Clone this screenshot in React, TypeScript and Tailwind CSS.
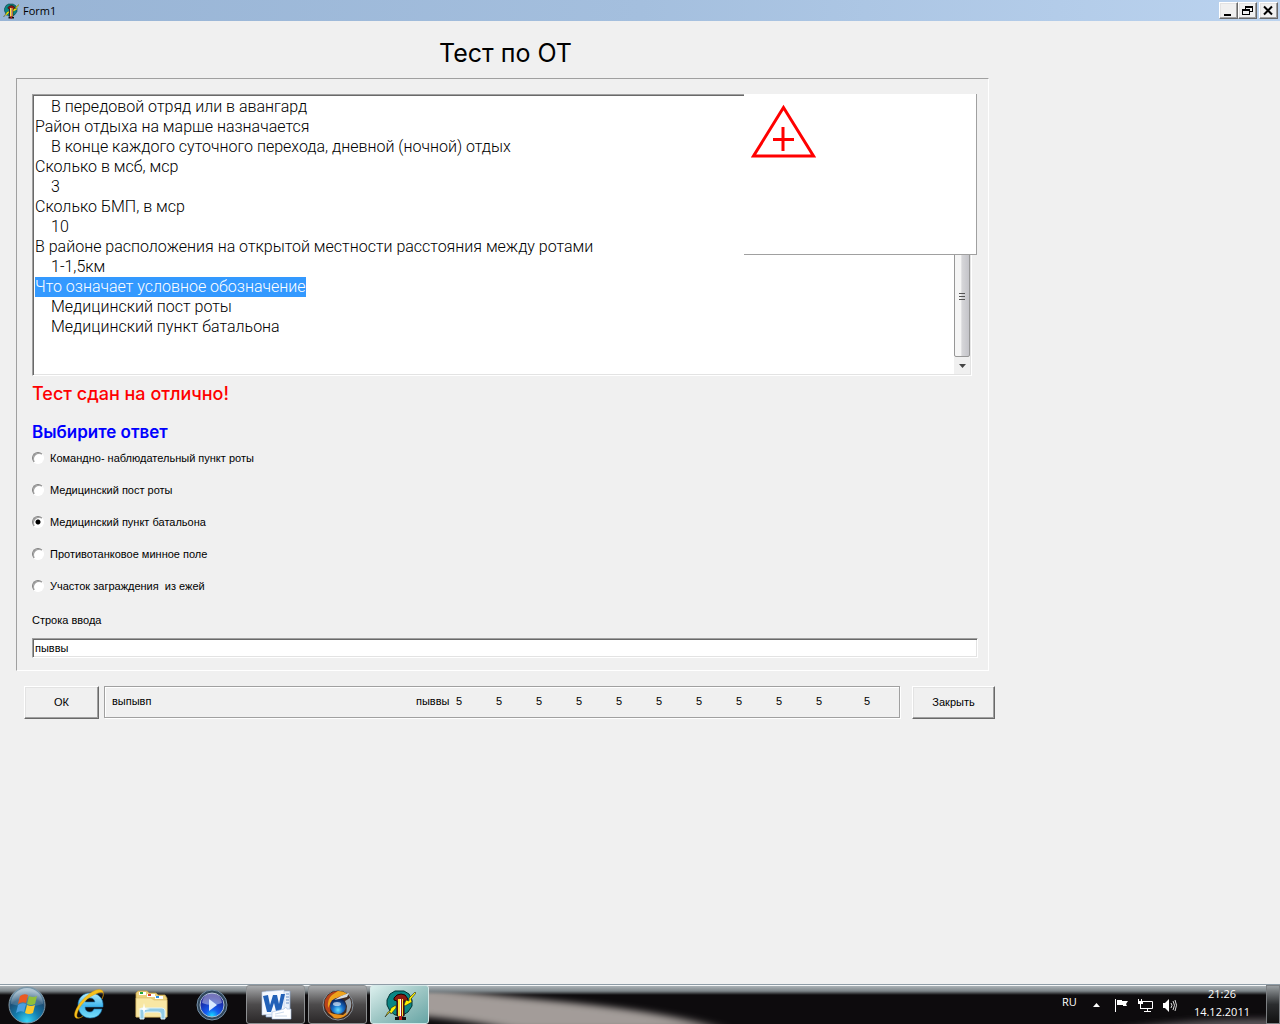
import { useState } from "react";
import type { ReactNode } from "react";
import { clsx } from "clsx";

type Line = { text: string; indent?: boolean; selected?: boolean };

const lines: Line[] = [
  { text: "В передовой отряд или в авангард", indent: true },
  { text: "Район отдыха на марше назначается" },
  { text: "В конце каждого суточного перехода, дневной (ночной) отдых", indent: true },
  { text: "Сколько в мсб, мср" },
  { text: "3", indent: true },
  { text: "Сколько БМП, в мср" },
  { text: "10", indent: true },
  { text: "В районе расположения на открытой местности расстояния между ротами" },
  { text: "1-1,5км", indent: true },
  { text: "Что означает условное обозначение", selected: true },
  { text: "Медицинский пост роты", indent: true },
  { text: "Медицинский пункт батальона", indent: true },
];

const answers = [
  "Командно- наблюдательный пункт роты",
  "Медицинский пост роты",
  "Медицинский пункт батальона",
  "Противотанковое минное поле",
  "Участок заграждения  из ежей",
];

const grades = [5, 5, 5, 5, 5, 5, 5, 5, 5, 5];

const raised =
  "border border-t-white border-l-white border-r-[#696969] border-b-[#696969] bg-[#f0f0f0] shadow-[inset_-1px_-1px_0_#a0a0a0,inset_1px_1px_0_#e3e3e3]";
const sunken =
  "border border-t-[#a0a0a0] border-l-[#a0a0a0] border-r-white border-b-white bg-white shadow-[inset_1px_1px_0_#696969,inset_-1px_-1px_0_#e3e3e3]";

function DelphiIcon({ className }: { className?: string }) {
  return (
    <svg viewBox="0 0 32 32" className={className} aria-hidden="true">
      <path d="M11 2h9l5 3 3 6v6l-4 6-5 3h-8l-5-4-3-6v-5l3-6z" fill="#0a8583" stroke="#033" strokeWidth="1" />
      <path d="M10 9l3-3 4-1 4 1 3 4-1 2h-3v15h-7V12l-3-1z" fill="#8b1a12" stroke="#200" strokeWidth="1" />
      <path d="M14 10h2v17h-2z" fill="#ffe640" />
      <path d="M16 10h1v17h-1z" fill="#fff" />
      <path d="M18 10h1v17h-1z" fill="#ffe640" />
      <path d="M11 28h11v3H11z" fill="#111" />
      <path d="M15 27h3v4h-3z" fill="#c01818" />
      <path d="M31 3l-6 6v3l-3-1-2 5 1 1 7-4-1-3 5-6z" fill="#fff200" stroke="#222" strokeWidth=".6" />
      <path d="M1 28l5-5 1 2 5-6v-3l-5 3-1 3-2 1z" fill="#fff200" stroke="#222" strokeWidth=".6" />
    </svg>
  );
}

function StartOrb() {
  return (
    <svg viewBox="0 0 38 38" className="size-[38px]" aria-hidden="true">
      <defs>
        <radialGradient id="orb" cx=".5" cy=".95" r=".85">
          <stop offset="0" stopColor="#37d5f5" />
          <stop offset=".4" stopColor="#137eaf" />
          <stop offset=".75" stopColor="#1c4e75" />
          <stop offset="1" stopColor="#6d92aa" />
        </radialGradient>
        <linearGradient id="orbGloss" x2="0" y2="1">
          <stop offset="0" stopColor="#fff" stopOpacity=".5" />
          <stop offset="1" stopColor="#fff" stopOpacity=".1" />
        </linearGradient>
      </defs>
      <circle cx="19" cy="19" r="18" fill="url(#orb)" stroke="#8197a4" />
      <path d="M3 18a16 16 0 0132 0q-16 5-32 0z" fill="url(#orbGloss)" />
      <path d="M12 10q4-3 8-1l-2 8q-4-2-8 1z" fill="#ea5a22" />
      <path d="M21 10q4 2 8 0l-2 8q-4 2-8 0z" fill="#91bf39" />
      <path d="M10 19q4-3 8-1l-2 8q-4-2-8 1z" fill="#4a9fe0" />
      <path d="M19 19q4 2 8 0l-2 8q-4 2-8 0z" fill="#fdc92c" />
    </svg>
  );
}

function ExplorerE() {
  return (
    <svg viewBox="0 0 32 32" className="size-8" aria-hidden="true">
      <defs>
        <linearGradient id="ie" x2="0" y2="1">
          <stop offset="0" stopColor="#b8effd" />
          <stop offset=".5" stopColor="#45b8ee" />
          <stop offset="1" stopColor="#78dffa" />
        </linearGradient>
      </defs>
      <path
        d="M16 4C9 4 4 9 4 16s5 13 12 13c7 0 11-4 12-9h-8c-1 2-2 3-4 3-3 0-5-2-5-5h18c1-9-5-14-13-14zm-5 9c1-3 2-4 5-4s4 1 5 4z"
        fill="url(#ie)"
        stroke="#1778b8"
        strokeWidth=".6"
      />
      <path
        d="M28 10c3-6 1-8-4-6C15 7 5 16 3 25c-1 4 2 5 6 2-5 4-10 3-8-4C4 14 14 4 22 1c7-2 9 2 6 9z"
        fill="#f8c21c"
        stroke="#d99408"
        strokeWidth=".4"
      />
    </svg>
  );
}

function FolderIcon() {
  return (
    <svg viewBox="0 0 34 32" className="h-8 w-[34px]" aria-hidden="true">
      <path d="M2 4l2-2h9l2 2h7l2 2h7l2 3v19H2z" fill="#ecd17c" stroke="#c4a24c" strokeWidth=".8" />
      <path d="M5 3h7v3H5zM13 5h8v3h-8zM21 7h8v3h-8z" fill="#fff" />
      <path d="M6 3h3v2H6z" fill="#20a83c" />
      <path d="M14 5h3v2h-3z" fill="#d8402c" />
      <path d="M22 7h3v2h-3z" fill="#2c8fe0" />
      <path d="M2 9h15l3 2h13v17H2z" fill="#f8e7a4" stroke="#d8bb68" strokeWidth=".6" />
      <path d="M6 30V21q0-2 2-2h20q3 0 3 3v8h-4v-5q0-2-3-2H13q-3 0-3 2v5z" fill="#93cce6" stroke="#e0f4fc" />
      <path d="M10 14l1 5 5 1-5 1-1 5-1-5-5-1 5-1z" fill="#fff" />
    </svg>
  );
}

function PlayerIcon() {
  return (
    <svg viewBox="0 0 32 32" className="size-8" aria-hidden="true">
      <defs>
        <radialGradient id="player" cx=".5" cy=".95" r=".8">
          <stop offset="0" stopColor="#18dcff" />
          <stop offset=".35" stopColor="#155cf0" />
          <stop offset="1" stopColor="#1a1c90" />
        </radialGradient>
      </defs>
      <circle cx="16" cy="16" r="15" fill="#30475c" stroke="#7892a8" />
      <circle cx="16" cy="16" r="12" fill="url(#player)" stroke="#a9bccf" strokeWidth="1" />
      <path d="M6 14a10 10 0 0120 0q-10 4-20 0z" fill="#fff" fillOpacity=".4" />
      <path d="M13 10l8 6-8 6z" fill="#d8e9ff" />
    </svg>
  );
}

function WordIcon() {
  return (
    <svg viewBox="0 0 32 32" className="size-8" aria-hidden="true">
      <path d="M6 2h24v26H6z" fill="#e8f0fa" stroke="#8aa7cf" strokeWidth=".7" />
      <path d="M26 5h3M26 8h3M26 11h3M26 14h3" stroke="#6d92c6" />
      <path d="M2 3l22-2v23L2 26z" fill="#f5f9ff" stroke="#b5cbe8" strokeWidth=".6" />
      <path d="M3 7l5-1 2 10 3-10h4l2 9 2-10h4l-4 17h-5l-2-8-3 9H7z" fill="#2161b8" />
      <path d="M12 23l12-3 2-2 1 2h4v10H12z" fill="#fff" stroke="#a9c1e0" strokeWidth=".6" />
      <path d="M15 25l9-2M15 27h12" stroke="#b8cbe4" strokeWidth=".7" />
    </svg>
  );
}

function BrowserIcon() {
  return (
    <svg viewBox="0 0 32 32" className="size-8" aria-hidden="true">
      <defs>
        <radialGradient id="globe" cx=".5" cy=".75" r=".7">
          <stop offset="0" stopColor="#67e2ff" />
          <stop offset=".45" stopColor="#1670cc" />
          <stop offset="1" stopColor="#0b1c50" />
        </radialGradient>
      </defs>
      <circle cx="16" cy="16" r="15" fill="#3d2b24" stroke="#87929c" />
      <path d="M3 11A14 14 0 0116 2l3 5-8 5-3 9 2 6A14 14 0 013 11z" fill="#b9431a" />
      <path d="M16 2q6 0 9 3l-9 3-7 5-3 6q-1-9 4-13z" fill="#eea31d" />
      <path d="M28 20a13 13 0 01-16 9l-6-6 6 2 9 1z" fill="#e8921d" />
      <circle cx="16" cy="17" r="8" fill="url(#globe)" />
      <path d="M27 4l-8 3-7 4 5-1 8-2z" fill="#d9dde0" />
      <path d="M28 9q4 10-4 17l1-9-2-5z" fill="#9aa3ab" />
      <ellipse cx="15" cy="15" rx="4" ry="2" fill="#fff" fillOpacity=".6" />
    </svg>
  );
}

function TitleBar() {
  const button = clsx(raised, "flex h-[17px] w-[19px] items-center justify-center");
  return (
    <header className="flex h-[21px] items-center bg-linear-to-r from-[#98b4d5] via-[#a4bfde] to-[#bbd3ef] pr-[2px] pl-[3px]">
      <DelphiIcon className="size-4" />
      <h1 className="ml-1 flex-1 font-['Open_Sans',sans-serif] text-[11px] leading-4">Form1</h1>
      <button type="button" aria-label="Свернуть" className={button}>
        <svg width="13" height="11" aria-hidden="true">
          <path d="M2 9h7v2H2z" />
        </svg>
      </button>
      <button type="button" aria-label="Восстановить" className={button}>
        <svg width="13" height="11" aria-hidden="true">
          <path d="M4 1h8v6H9V6h2V3H5v1H4zM1 4h8v6H1zm1 2v3h6V6z" fillRule="evenodd" />
        </svg>
      </button>
      <button type="button" aria-label="Закрыть окно" className={clsx(button, "ml-[2px]")}>
        <svg width="13" height="11" aria-hidden="true">
          <path d="M2 1.500l8 8M10 1.500l-8 8" stroke="#000" strokeWidth="2" />
        </svg>
      </button>
    </header>
  );
}

function QuestionLog() {
  return (
    <div className="relative">
      <div className={clsx(sunken, "mr-[6px] flex h-[282px] p-px")}>
        <ul className="flex-1 overflow-hidden pt-px pl-px font-[Roboto,sans-serif] text-base leading-5 font-light whitespace-nowrap">
          {lines.map((line) => (
            <li key={line.text} className={clsx(line.indent && "pl-4")}>
              <span className={clsx("inline-block", line.selected && "bg-[#3399ff] text-white")}>{line.text}</span>
            </li>
          ))}
        </ul>
        <div className="flex w-4 flex-col bg-[#f0f0f0]" aria-hidden="true">
          <div className="flex flex-1 flex-col items-center rounded-xs border border-[#979797] bg-linear-to-r from-[#f5f5f5] from-40% via-[#d6d6d9] via-50% to-[#c4c4c9] pt-[195px]">
            <svg width="8" height="9">
              <path d="M1 1.500h6M1 4.500h6M1 7.500h6" stroke="#555" />
            </svg>
          </div>
          <div className="flex h-[17px] items-center justify-center">
            <svg width="7" height="4">
              <path d="M0 0h7L3.500 4z" fill="#444" />
            </svg>
          </div>
        </div>
      </div>
      {/* question picture, covers the corner of the log */}
      <div className="absolute top-0 right-px h-[161px] w-[233px] border-r border-b border-[#a0a0a0] bg-white">
        <svg width="80" height="70" role="img" aria-label="Условное обозначение">
          <path d="M39.500 13.500L9.500 62H69.500z" fill="none" stroke="#f00" strokeWidth="3" />
          <path d="M29 45.500h21M39 33v24" stroke="#f00" strokeWidth="3" />
        </svg>
      </div>
    </div>
  );
}

function TaskButton({ label, active, children }: { label: string; active?: boolean; children: ReactNode }) {
  return (
    <button
      type="button"
      aria-label={label}
      className={clsx(
        "flex h-[39px] w-[59px] items-center justify-center rounded-[3px] border",
        active
          ? "border-[#d5e8e8] bg-linear-to-br from-[#dcf0ee] via-[#9dc6c4] to-[#67a5a5]"
          : "border-[#8d8f91] bg-linear-to-b from-[#a9abad] via-[#4d4b4c] to-[#2b2829]"
      )}
    >
      {children}
    </button>
  );
}

function Taskbar() {
  return (
    <footer className="relative flex h-10 items-stretch overflow-hidden border-t border-[#8e9ca6] bg-[#0d0b0d] font-['Open_Sans',sans-serif] text-[11px] text-white">
      <svg className="absolute inset-0 size-full" preserveAspectRatio="none" viewBox="0 0 1280 39" aria-hidden="true">
        <defs>
          <linearGradient id="edge" x2="0" y2="1">
            <stop offset="0" stopColor="#b5bcc0" />
            <stop offset=".6" stopColor="#7d8589" />
            <stop offset="1" stopColor="#7d8589" stopOpacity="0" />
          </linearGradient>
          <filter id="soft" x="-20%" y="-50%" width="140%" height="200%">
            <feGaussianBlur stdDeviation="10 3" />
          </filter>
        </defs>
        <path d="M380 0L440 4C530 16 650 20 720 44H510C480 38 460 34 400 29z" fill="#a39c99" filter="url(#soft)" />
        <path d="M1110 46Q1190 32 1290 34V46z" fill="#5a5558" filter="url(#soft)" />
        <path d="M0 0h1280v10H0z" fill="url(#edge)" />
        <path d="M0 0h1280v1H0z" fill="#f4f6f7" />
      </svg>
      <nav className="relative flex flex-1 items-center">
        <button type="button" aria-label="Пуск" className="ml-2">
          <StartOrb />
        </button>
        <button type="button" aria-label="Internet Explorer" className="ml-7">
          <ExplorerE />
        </button>
        <button type="button" aria-label="Проводник" className="ml-7">
          <FolderIcon />
        </button>
        <button type="button" aria-label="Проигрыватель" className="ml-7">
          <PlayerIcon />
        </button>
        <div className="ml-[18px] flex gap-[3px]">
          <TaskButton label="Word">
            <WordIcon />
          </TaskButton>
          <TaskButton label="Браузер">
            <BrowserIcon />
          </TaskButton>
          <TaskButton label="Form1" active>
            <DelphiIcon className="size-8" />
          </TaskButton>
        </div>
      </nav>
      <div className="relative flex items-center">
        <span className="mr-4 mb-1">RU</span>
        <svg width="7" height="4" className="mr-[14px]" aria-hidden="true">
          <path d="M3.500 0L7 4H0z" fill="#fff" />
        </svg>
        <svg width="16" height="16" className="mr-2" aria-hidden="true">
          <path d="M1 2h1v13H1zM3 3h5v1h6l-2 3 1 2H9V8H3z" fill="#fff" />
        </svg>
        <svg width="16" height="16" className="mr-2" aria-hidden="true">
          <path d="M5 4.500h9.500v7H5M9.500 12v2M6 14.500h7" fill="none" stroke="#fff" />
          <path d="M0 2h1v2h2V2h1v2h1v3H3v4h2v1H2V7H0z" fill="#fff" />
        </svg>
        <svg width="16" height="16" aria-hidden="true">
          <path d="M1 6h2l4-4v13l-4-4H1z" fill="#fff" />
          <path d="M9 6q2 2 0 5M11 4q3 4 0 9M13 3q3 5 0 11" fill="none" stroke="#ddd" />
        </svg>
        <div className="mr-4 ml-4 flex h-full flex-col text-center leading-[18px]">
          <time>21:26</time>
          <time>14.12.2011</time>
        </div>
        <button
          type="button"
          aria-label="Показать рабочий стол"
          className="h-full w-[14px] border border-[#7c7f82] bg-linear-to-b from-[#9a9fa2] via-[#2b2d2f] to-[#111]"
        />
      </div>
    </footer>
  );
}

export default function App() {
  const [answer, setAnswer] = useState(2);
  const [entry, setEntry] = useState("пыввы");

  return (
    <div className="flex min-h-screen flex-col bg-[#f0f0f0] font-['Liberation_Sans',Arial,sans-serif] text-black">
      <TitleBar />
      <main className="w-full max-w-[995px] flex-1 pl-4 text-[11px]">
        <h2 className="pt-4 text-center font-[Inter,sans-serif] text-[25px] leading-8">Тест по ОТ</h2>
        <section className="mt-[9px] mr-[6px] border border-t-[#a0a0a0] border-r-white border-b-white border-l-[#a0a0a0] pt-[15px] pr-[10px] pb-3 pl-[15px]">
          <QuestionLog />
          <p className="mt-[6px] font-[Inter,sans-serif] text-lg leading-6 font-medium text-[#f00]">
            Тест сдан на отлично!
          </p>
          <fieldset className="mt-[14px]">
            <legend className="font-[Inter,sans-serif] text-[17px] leading-6 font-semibold text-[#00f]">
              Выбирите ответ
            </legend>
            <div className="flex flex-col gap-4 pt-[6px]">
              {answers.map((text, i) => (
                <label key={text} className="flex h-4 items-center gap-[6px] whitespace-pre">
                  <input
                    type="radio"
                    name="answer"
                    checked={answer === i}
                    onChange={() => setAnswer(i)}
                    className="size-3 appearance-none rounded-full border border-t-[#808080] border-r-white border-b-white border-l-[#808080] bg-white shadow-[inset_1px_1px_0_#a0a0a0] checked:bg-[radial-gradient(circle,#000_2px,#fff_3px)]"
                  />
                  {text}
                </label>
              ))}
            </div>
          </fieldset>
          <label htmlFor="entry" className="mt-[18px] block leading-4">
            Строка ввода
          </label>
          <input
            id="entry"
            value={entry}
            onChange={(e) => setEntry(e.target.value)}
            className={clsx(sunken, "mt-[10px] block h-5 w-full px-[2px]")}
          />
        </section>
        <div className="mt-[15px] flex items-start pl-2">
          <button type="button" className={clsx(raised, "h-[33px] w-[75px]")}>
            ОК
          </button>
          <div className="mr-3 ml-[5px] h-8 flex-1 border border-[#a0a0a0] pl-[7px] shadow-[inset_1px_1px_0_#fff,1px_1px_0_#fff]">
            <table className="leading-7">
              <tbody>
                <tr>
                  <td className="w-[304px] min-w-[304px]">выпывп</td>
                  <td className="w-10 min-w-10">пыввы</td>
                  {grades.map((grade, i) => (
                    <td key={i} className="w-10 min-w-10">
                      {grade}
                    </td>
                  ))}
                  <td className="pl-2">5</td>
                </tr>
              </tbody>
            </table>
          </div>
          <button type="button" className={clsx(raised, "h-[33px] w-[83px]")}>
            Закрыть
          </button>
        </div>
      </main>
      <Taskbar />
    </div>
  );
}
